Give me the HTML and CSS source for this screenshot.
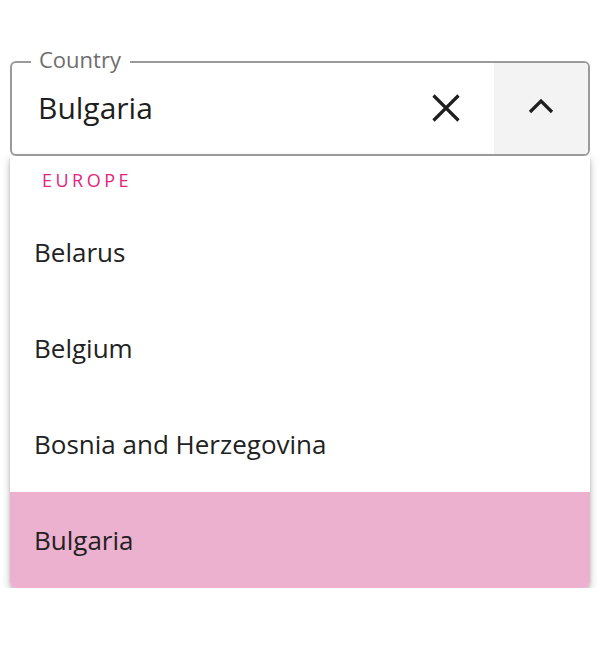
FILE: index.html
```html
<!DOCTYPE html>
<html>
<head>
<meta charset="utf-8">
<link rel="stylesheet" href="styles.css">
</head>
<body>
<div class="wrap">
  <div class="field">
    <span class="label">Country</span>
    <span class="value">Bulgaria</span>
    <button class="clear" aria-label="Clear">
      <svg width="30" height="30" viewBox="0 0 30 30"><path d="M2.5 2.5 L27.5 27.5 M27.5 2.5 L2.5 27.5" stroke="#1f1f1f" stroke-width="3.2" fill="none"/></svg>
    </button>
    <button class="toggle" aria-label="Close">
      <svg width="26" height="18" viewBox="0 0 26 18"><path d="M2 15 L13 4 L24 15" stroke="#1f1f1f" stroke-width="3.2" fill="none"/></svg>
    </button>
  </div>
  <ul class="list">
    <li class="group">EUROPE</li>
    <li class="item">Belarus</li>
    <li class="item">Belgium</li>
    <li class="item">Bosnia and Herzegovina</li>
    <li class="item selected">Bulgaria</li>
  </ul>
</div>
</body>
</html>
```
FILE: styles.css
```css
* { box-sizing: border-box; }
body { margin: 0; background: #fff; font-family: "Open Sans", "Liberation Sans", sans-serif; color: #222; }
.wrap { padding: 61px 10px 0 10px; }
.field {
  position: relative;
  display: flex; align-items: stretch;
  border: 2px solid #9a9a9a; border-radius: 6px;
  height: 95px;
}
.label {
  position: absolute; left: 19px; top: -18px;
  padding: 0 9px 0 8px; background: #fff;
  font-size: 22px; line-height: 28px; color: #6e6e6e;
}
.value { flex: 1; display: flex; align-items: center; padding-left: 26px; padding-bottom: 2px; font-size: 30px; color: #1e1e1e; }
.clear { border: 0; background: transparent; width: 80px; display: flex; align-items: center; justify-content: center; padding: 0 0 2px 0; margin-right: 8px; }
.toggle { border: 0; background: #f3f3f3; width: 94px; display: flex; align-items: center; justify-content: center; padding: 0 0 6px 0; border-radius: 0 4px 4px 0; }
.list {
  list-style: none; margin: 0; padding: 0;
  background: #fff; border-radius: 0 0 6px 6px; overflow: hidden;
  box-shadow: 0 4px 8px rgba(0,0,0,0.25), 0 1px 3px rgba(0,0,0,0.15);
}
.group { height: 48px; padding-left: 32px; display: flex; align-items: center; font-size: 18px; letter-spacing: 3.5px; color: #e5237d; }
.item { height: 96px; display: flex; align-items: center; padding-left: 24px; font-size: 26px; color: #222; }
.selected { background: #ecb1cf; }
```
